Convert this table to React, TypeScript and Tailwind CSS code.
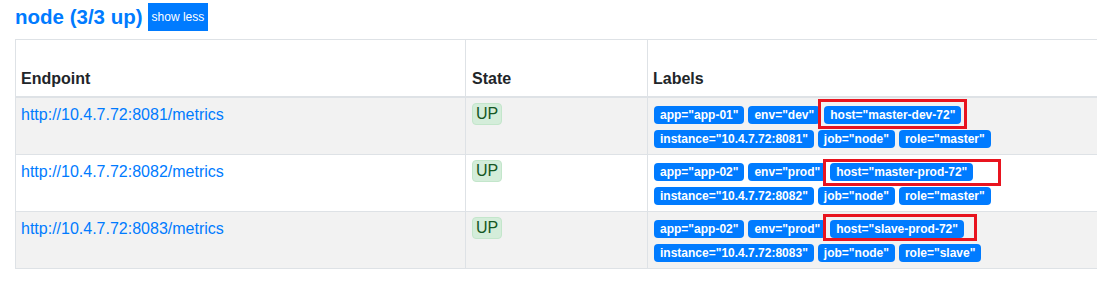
import React from "react";

type Target = {
    endpoint: string;
    labels: [string, string][];
    box: { top: number; right: number; bottom: number; left: number };
};

const targets: Target[] = [
    {
        endpoint: "http://10.4.7.72:8081/metrics",
        labels: [
            ["app", "app-01"],
            ["env", "dev"],
            ["host", "master-dev-72"],
            ["instance", "10.4.7.72:8081"],
            ["job", "node"],
            ["role", "master"],
        ],
        box: { top: -7, right: -6, bottom: -5, left: -6 },
    },
    {
        endpoint: "http://10.4.7.72:8082/metrics",
        labels: [
            ["app", "app-02"],
            ["env", "prod"],
            ["host", "master-prod-72"],
            ["instance", "10.4.7.72:8082"],
            ["job", "node"],
            ["role", "master"],
        ],
        box: { top: -4, right: -28, bottom: -5, left: -7 },
    },
    {
        endpoint: "http://10.4.7.72:8083/metrics",
        labels: [
            ["app", "app-02"],
            ["env", "prod"],
            ["host", "slave-prod-72"],
            ["instance", "10.4.7.72:8083"],
            ["job", "node"],
            ["role", "slave"],
        ],
        box: { top: -6, right: -13, bottom: -3, left: -7 },
    },
];

function Label({ name, value }: { name: string; value: string }) {
    return (
        <span className="block bg-[#007bff] text-white font-bold text-[12px] leading-[12px] px-[6px] py-[3px] rounded-[4px] whitespace-nowrap">
            {name}="{value}"
        </span>
    );
}

export default function App() {
    return (
        <div className="w-[1097px] h-[285px] overflow-hidden bg-white text-[#212529] font-['Liberation_Sans',Arial,sans-serif]">
            <div className="flex items-center h-[28px] mt-[3px] pl-[15px] gap-[5px]">
                <h2 className="text-[20.5px] leading-[28px] font-bold text-[#007bff]">node (3/3 up)</h2>
                <button className="bg-[#007bff] text-white text-[12px] leading-[28px] h-[28px] px-[4px]">show less</button>
            </div>

            <table className="ml-[15px] mt-[8px] w-[1150px] table-fixed border-collapse text-[16px] leading-[24px]">
                <colgroup>
                    <col className="w-[450px]" />
                    <col className="w-[182px]" />
                    <col />
                </colgroup>
                <thead>
                    <tr className="h-[57px]">
                        <th className="border border-[#dee2e6] border-b-2 align-bottom text-left font-bold px-[5px] pb-[5px]">Endpoint</th>
                        <th className="border border-[#dee2e6] border-b-2 align-bottom text-left font-bold px-[6px] pb-[5px]">State</th>
                        <th className="border border-[#dee2e6] border-b-2 align-bottom text-left font-bold px-[5px] pb-[5px]">Labels</th>
                    </tr>
                </thead>
                <tbody>
                    {targets.map((t, i) => (
                        <tr key={t.endpoint} className={i % 2 === 0 ? "bg-[#f2f2f2]" : "bg-white"}>
                            <td className="border border-[#dee2e6] align-top px-[5px] pt-[5px]">
                                <a href="#" className="text-[#007bff]">{t.endpoint}</a>
                            </td>
                            <td className="border border-[#dee2e6] align-top px-[6px] pt-[4px]">
                                <span className="inline-block bg-[#d4edda] text-[#155724] border border-[#c3e6cb] rounded-[4px] text-[16px] leading-[16px] px-[3px] py-[2px]">
                                    UP
                                </span>
                            </td>
                            <td className="border border-[#dee2e6] align-top px-[6px] pt-[8px] pb-[6px]">
                                <div className="flex flex-wrap items-start gap-x-[4px] gap-y-[6px] w-[340px]">
                                    {t.labels.map(([k, v]) =>
                                        k === "host" ? (
                                            <div key={k} className="relative flex">
                                                <Label name={k} value={v} />
                                                <span
                                                    className="absolute border-[3px] border-[#e8141f] pointer-events-none"
                                                    style={{ top: t.box.top, right: t.box.right, bottom: t.box.bottom, left: t.box.left }}
                                                />
                                            </div>
                                        ) : (
                                            <Label key={k} name={k} value={v} />
                                        )
                                    )}
                                </div>
                            </td>
                        </tr>
                    ))}
                </tbody>
            </table>
        </div>
    );
}
